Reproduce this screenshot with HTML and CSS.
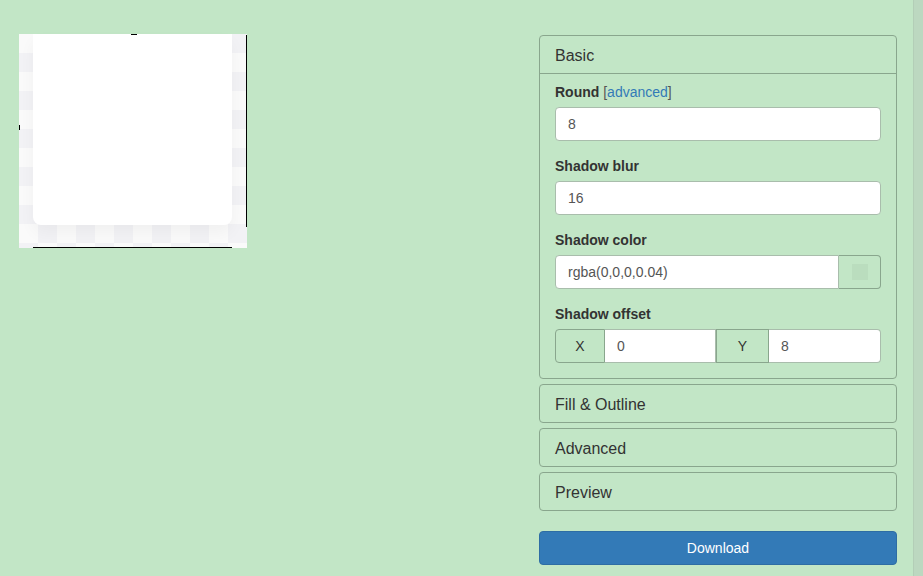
FILE: index.html
```html
<!DOCTYPE html>
<html>
<head>
<meta charset="utf-8">
<title>Shadow generator</title>
<link rel="stylesheet" href="styles.css">
</head>
<body>
<div class="page">
  <div class="content">
    <div class="preview-col">
      <div class="canvas">
        <div class="shape"></div>
        <div class="mark mark-right"></div>
        <div class="mark mark-bottom"></div>
        <div class="mark mark-top"></div>
        <div class="mark mark-left"></div>
      </div>
    </div>
    <div class="sidebar">
      <div class="panel">
        <div class="panel-heading">Basic</div>
        <div class="panel-body">
          <div class="form-group">
            <label class="label">Round <span class="bracket">[<a class="link">advanced</a>]</span></label>
            <div class="input">8</div>
          </div>
          <div class="form-group">
            <label class="label">Shadow blur</label>
            <div class="input">16</div>
          </div>
          <div class="form-group">
            <label class="label">Shadow color</label>
            <div class="input-group">
              <div class="input input-left grow">rgba(0,0,0,0.04)</div>
              <div class="addon addon-swatch addon-right"><span class="swatch"></span></div>
            </div>
          </div>
          <div class="form-group last">
            <label class="label">Shadow offset</label>
            <div class="input-group">
              <div class="addon addon-x addon-left">X</div>
              <div class="input input-mid grow">0</div>
              <div class="addon addon-y addon-mid">Y</div>
              <div class="input input-right grow">8</div>
            </div>
          </div>
        </div>
      </div>
      <div class="panel"><div class="panel-heading flat">Fill &amp; Outline</div></div>
      <div class="panel"><div class="panel-heading flat">Advanced</div></div>
      <div class="panel"><div class="panel-heading flat">Preview</div></div>
      <button class="btn">Download</button>
    </div>
  </div>
  <div class="strip"></div>
</div>
</body>
</html>
```

FILE: styles.css
```css
* { box-sizing: border-box; }
html, body { margin: 0; padding: 0; }
body {
  background: #c2e6c6;
  font-family: "Liberation Sans", Arial, sans-serif;
  font-size: 14px;
  color: #333;
  overflow: hidden;
}
.page {
  display: flex;
  height: 576px;
}
.content {
  display: flex;
  padding: 34px 0 0 19px;
  flex: 1;
}
.preview-col { width: 228px; }
.canvas {
  position: relative;
  width: 228px;
  height: 214px;
  background-color: #fafafa;
  background-image: conic-gradient(#f2f2f5 0 25%, #fafafa 0 50%, #f2f2f5 0 75%, #fafafa 0);
  background-size: 38px 38px;
}
.shape {
  position: absolute;
  left: 14px;
  top: 0;
  width: 199px;
  height: 191px;
  background: #fff;
  border-radius: 0 0 8px 8px;
  box-shadow: 0 8px 16px rgba(0,0,0,0.04);
}
.mark { position: absolute; background: #000; }
.mark-right { left: 227px; top: 1px; width: 1px; height: 192px; }
.mark-bottom { left: 14px; top: 213px; width: 199px; height: 1px; }
.mark-top { left: 112px; top: 0; width: 6px; height: 1px; }
.mark-left { left: 0; top: 91px; width: 1px; height: 5px; }

.sidebar {
  width: 358px;
  margin-left: 292px;
  padding-top: 1px;
}
.panel {
  border: 1px solid #89a68d;
  border-radius: 4px;
  margin-bottom: 5px;
}
.panel-heading {
  padding: 11px 15px 9px;
  font-size: 16px;
  line-height: 17px;
  border-bottom: 1px solid #89a68d;
}
.panel-heading.flat { border-bottom: none; }
.panel-body {
  padding: 8px 15px 15px;
}
.form-group { margin-bottom: 15px; }
.form-group.last { margin-bottom: 0; }
.label {
  display: block;
  font-weight: bold;
  font-size: 14px;
  line-height: 20px;
  margin-bottom: 5px;
}
.bracket { font-weight: normal; color: #555; }
.link { color: #337ab7; }
.input {
  height: 34px;
  padding: 0 12px;
  line-height: 32px;
  background: #fff;
  border: 1px solid #a9bdac;
  border-radius: 4px;
  font-size: 14px;
  color: #555;
}
.input-group { display: flex; height: 34px; }
.grow { flex: 1; }
.input-left { border-radius: 4px 0 0 4px; }
.input-mid { border-radius: 0; border-left: none; }
.input-right { border-radius: 0 4px 4px 0; border-left: none; flex: 0 0 112px; }
.input-mid { flex: 0 0 111px; }
.addon {
  display: flex;
  align-items: center;
  justify-content: center;
  border: 1px solid #89a68d;
  font-size: 14px;
  color: #333;
}
.addon-left { border-radius: 4px 0 0 4px; width: 50px; }
.addon-mid { width: 53px; border-left: 1px solid #89a68d; }
.addon-right { border-radius: 0 4px 4px 0; width: 42px; border-left: none; }
.swatch {
  width: 16px;
  height: 16px;
  background: rgba(0,0,0,0.04);
}
.btn {
  display: block;
  width: 100%;
  height: 34px;
  margin-top: 20px;
  background: #337ab7;
  border: 1px solid #2e6da4;
  border-radius: 4px;
  color: #fff;
  font-family: "Liberation Sans", Arial, sans-serif;
  font-size: 14px;
  padding: 0;
}
.strip {
  width: 10px;
  flex: 0 0 10px;
  background: #bcd8c0;
  border-left: 1px solid #b3ceb7;
}
```
